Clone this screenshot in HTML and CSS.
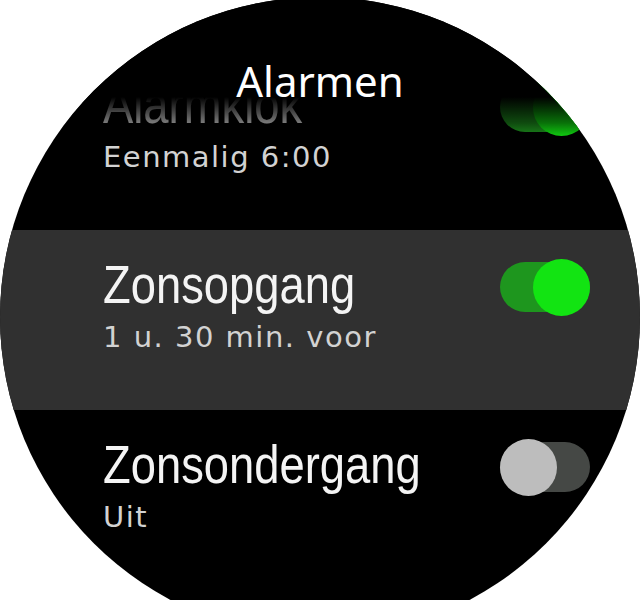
FILE: index.html
```html
<!DOCTYPE html>
<html lang="nl">
<head>
<meta charset="utf-8">
<title>Alarmen</title>
<link rel="stylesheet" href="styles.css">
</head>
<body>
<div class="watch">
  <div class="list">
    <div class="row">
      <div class="texts">
        <div class="title"><span class="narrow">Alarmklok</span></div>
        <div class="sub">Eenmalig 6:00</div>
      </div>
      <div class="toggle on"><div class="knob"></div></div>
    </div>
    <div class="row selected">
      <div class="texts">
        <div class="title"><span class="narrow">Zonsopgang</span></div>
        <div class="sub">1 u. 30 min. voor</div>
      </div>
      <div class="toggle on"><div class="knob"></div></div>
    </div>
    <div class="row">
      <div class="texts">
        <div class="title"><span class="narrow">Zonsondergang</span></div>
        <div class="sub">Uit</div>
      </div>
      <div class="toggle off"><div class="knob"></div></div>
    </div>
  </div>
  <div class="header">Alarmen</div>
</div>
</body>
</html>
```
FILE: styles.css
```css
html, body {
  margin: 0;
  padding: 0;
  background: #ffffff;
  overflow: hidden;
  height: 600px;
}

.watch {
  position: relative;
  width: 640px;
  height: 640px;
  margin-top: -3px;
  border-radius: 50%;
  background: #000000;
  overflow: hidden;
}

.list {
  padding-top: 53px;
  display: flex;
  flex-direction: column;
}

.row {
  height: 180px;
  display: flex;
  align-items: flex-start;
}

.row.selected {
  background: #303030;
}

.texts {
  flex: 1;
  min-width: 0;
  padding-left: 103px;
  padding-top: 27px;
}

.title {
  font-family: "Liberation Sans", sans-serif;
  font-size: 54px;
  line-height: 54px;
  height: 54px;
  color: #f4f4f4;
  white-space: nowrap;
}

.narrow {
  display: inline-block;
  transform: scaleX(0.84);
  transform-origin: 0 50%;
}

.sub {
  margin-top: 12px;
  font-family: "DejaVu Sans", sans-serif;
  font-size: 29px;
  line-height: 29px;
  letter-spacing: 1.5px;
  color: #d2d2d2;
  white-space: nowrap;
}

.toggle {
  width: 90px;
  height: 50px;
  margin-top: 32px;
  margin-right: 50px;
  border-radius: 25px;
  display: flex;
  align-items: center;
  flex-shrink: 0;
}

.knob {
  width: 57px;
  height: 57px;
  border-radius: 50%;
  flex-shrink: 0;
}

.toggle.on {
  background: #1e961e;
  justify-content: flex-end;
}

.toggle.on .knob {
  background: #12e412;
}

.toggle.off {
  background: #454845;
  justify-content: flex-start;
}

.toggle.off .knob {
  background: #bdbdbd;
}

.header {
  position: absolute;
  top: 0;
  left: 0;
  right: 0;
  height: 143px;
  box-sizing: border-box;
  padding-top: 63px;
  text-align: center;
  font-family: "Noto Sans", sans-serif;
  font-size: 42px;
  line-height: 42px;
  color: #ffffff;
  background: linear-gradient(to bottom, #000000 0, #000000 100px, rgba(0, 0, 0, 0.5) 126px, rgba(0, 0, 0, 0) 143px);
}
```
